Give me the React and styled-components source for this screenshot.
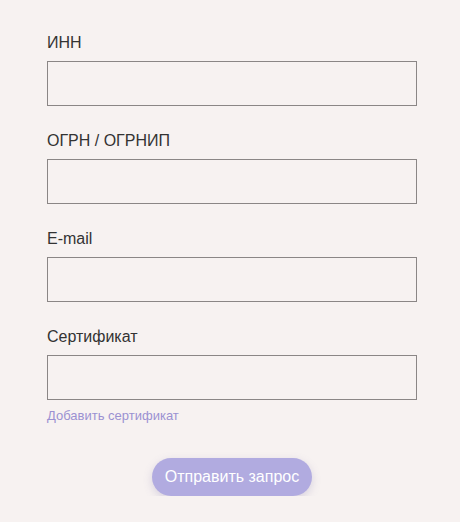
import React from "react";
import styled, { createGlobalStyle } from "styled-components";

const Global = createGlobalStyle`
  html, body { margin: 0; padding: 0; background: #f7f2f1; }
  body { font-family: Arial, "Liberation Sans", sans-serif; }
  * { box-sizing: border-box; }
`;

const Form = styled.form`
  width: 370px;
  margin-left: 47px;
  padding-top: 34px;
  display: flex;
  flex-direction: column;
`;

const Field = styled.div`
  display: flex;
  flex-direction: column;
  margin-bottom: ${(p) => (p.$last ? "0" : "26px")};
`;

const Label = styled.label`
  font-size: 16px;
  line-height: 18px;
  color: #333333;
  margin-bottom: 9px;
`;

const Input = styled.input`
  width: 370px;
  height: 45px;
  border: 1px solid #8b8686;
  background: transparent;
  font-family: inherit;
  font-size: 16px;
  padding: 0 12px;
  outline: none;
`;

const AddLink = styled.a`
  margin-top: 8px;
  font-size: 13px;
  line-height: 15px;
  color: #9b91d2;
  text-decoration: none;
  cursor: pointer;
`;

const Submit = styled.button`
  align-self: center;
  margin-top: 35px;
  width: 160px;
  height: 38px;
  border: none;
  border-radius: 19px;
  background: #b1abe0;
  color: #ffffff;
  font-family: inherit;
  font-size: 16px;
  box-shadow: 0 3px 8px rgba(120, 110, 170, 0.25);
  cursor: pointer;
`;

const fields = [
  { id: "inn", label: "ИНН" },
  { id: "ogrn", label: "ОГРН / ОГРНИП" },
  { id: "email", label: "E-mail" },
  { id: "cert", label: "Сертификат" },
];

export default function App() {
  return (
    <>
      <Global />
      <Form onSubmit={(e) => e.preventDefault()}>
        {fields.map((f, i) => (
          <Field key={f.id} $last={i === fields.length - 1}>
            <Label htmlFor={f.id}>{f.label}</Label>
            <Input id={f.id} />
          </Field>
        ))}
        <AddLink>Добавить сертификат</AddLink>
        <Submit type="submit">Отправить запрос</Submit>
      </Form>
    </>
  );
}
